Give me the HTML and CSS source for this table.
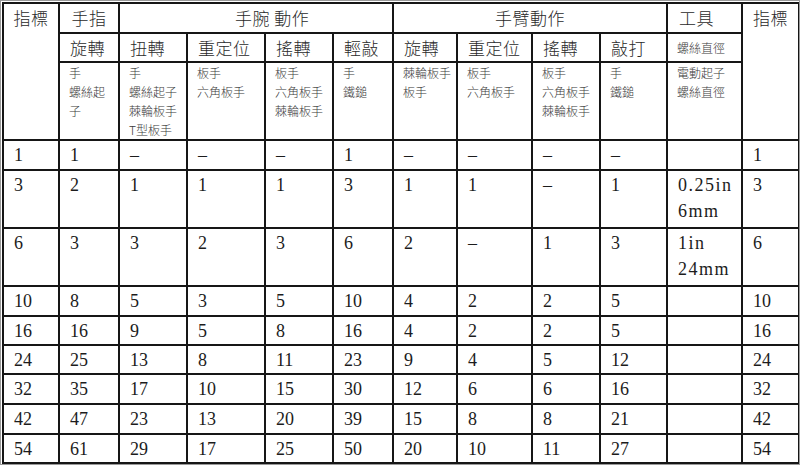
FILE: index.html
```html
<!DOCTYPE html>
<html lang="zh-Hant">
<head>
<meta charset="utf-8">
<title>指標</title>
<link rel="stylesheet" href="styles.css">
</head>
<body>
<div class="frame">
<table class="grid">
  <colgroup>
    <col class="c1"><col class="c2"><col class="c3"><col class="c4"><col class="c5"><col class="c6">
    <col class="c7"><col class="c8"><col class="c9"><col class="c10"><col class="c11"><col class="c12">
  </colgroup>
  <thead>
    <tr class="h1">
      <th rowspan="3" class="center">指標</th>
      <th class="center">手指</th>
      <th colspan="4" class="wrist">手腕 動作</th>
      <th colspan="4" class="center">手臂動作</th>
      <th class="tool">工具</th>
      <th rowspan="3" class="center">指標</th>
    </tr>
    <tr class="h2">
      <th>旋轉</th>
      <th>扭轉</th>
      <th>重定位</th>
      <th>搖轉</th>
      <th>輕敲</th>
      <th>旋轉</th>
      <th>重定位</th>
      <th>搖轉</th>
      <th>敲打</th>
      <th class="small mid">螺絲直徑</th>
    </tr>
    <tr class="h3">
      <th class="small">手<br>螺絲起<br>子</th>
      <th class="small">手<br>螺絲起子<br>棘輪板手<br>T型板手</th>
      <th class="small">板手<br>六角板手</th>
      <th class="small">板手<br>六角板手<br>棘輪板手</th>
      <th class="small">手<br>鐵鎚</th>
      <th class="small">棘輪板手<br>板手</th>
      <th class="small">板手<br>六角板手</th>
      <th class="small">板手<br>六角板手<br>棘輪板手</th>
      <th class="small">手<br>鐵鎚</th>
      <th class="small">電動起子<br>螺絲直徑</th>
    </tr>
  </thead>
  <tbody>
    <tr class="r30"><td>1</td><td>1</td><td>–</td><td>–</td><td>–</td><td>1</td><td>–</td><td>–</td><td>–</td><td>–</td><td></td><td>1</td></tr>
    <tr class="r58"><td>3</td><td>2</td><td>1</td><td>1</td><td>1</td><td>3</td><td>1</td><td>1</td><td>–</td><td>1</td><td class="size">0.25in<br>6mm</td><td>3</td></tr>
    <tr class="r58"><td>6</td><td>3</td><td>3</td><td>2</td><td>3</td><td>6</td><td>2</td><td>–</td><td>1</td><td>3</td><td class="size">1in<br>24mm</td><td>6</td></tr>
    <tr class="r30"><td>10</td><td>8</td><td>5</td><td>3</td><td>5</td><td>10</td><td>4</td><td>2</td><td>2</td><td>5</td><td></td><td>10</td></tr>
    <tr class="r29"><td>16</td><td>16</td><td>9</td><td>5</td><td>8</td><td>16</td><td>4</td><td>2</td><td>2</td><td>5</td><td></td><td>16</td></tr>
    <tr class="r29"><td>24</td><td>25</td><td>13</td><td>8</td><td>11</td><td>23</td><td>9</td><td>4</td><td>5</td><td>12</td><td></td><td>24</td></tr>
    <tr class="r30"><td>32</td><td>35</td><td>17</td><td>10</td><td>15</td><td>30</td><td>12</td><td>6</td><td>6</td><td>16</td><td></td><td>32</td></tr>
    <tr class="r30"><td>42</td><td>47</td><td>23</td><td>13</td><td>20</td><td>39</td><td>15</td><td>8</td><td>8</td><td>21</td><td></td><td>42</td></tr>
    <tr class="r29"><td>54</td><td>61</td><td>29</td><td>17</td><td>25</td><td>50</td><td>20</td><td>10</td><td>11</td><td>27</td><td></td><td>54</td></tr>
  </tbody>
</table>
</div>
</body>
</html>
```

FILE: styles.css
```css
html, body {
  margin: 0;
  padding: 0;
  background: #ffffff;
}

.frame {
  width: 798px;
  height: 463px;
  border: 1px solid #9a9a9a;
  padding: 0;
  overflow: hidden;
}

.grid {
  border-collapse: collapse;
  table-layout: fixed;
  width: 796px;
  margin: 1px 0 0 1px;
  font-family: "Liberation Serif", "Noto Sans CJK TC", serif;
  font-size: 18px;
  color: #1c1c1c;
}

.c1 { width: 56px; }
.c2 { width: 60px; }
.c3 { width: 68px; }
.c4 { width: 78px; }
.c5 { width: 68px; }
.c6 { width: 60px; }
.c7 { width: 64px; }
.c8 { width: 75px; }
.c9 { width: 68px; }
.c10 { width: 67px; }
.c11 { width: 75px; }
.c12 { width: 57px; }

.grid th,
.grid td {
  border: 2px solid #161616;
  padding: 1px 2px 0 10px;
  vertical-align: top;
  text-align: left;
  font-weight: normal;
  line-height: 26px;
  overflow: hidden;
  white-space: nowrap;
}

.grid th {
  font-family: "Noto Sans CJK TC", "Liberation Serif", sans-serif;
  font-size: 17px;
  font-weight: 300;
  letter-spacing: 0.5px;
  color: #2a2a2a;
}

.h1 { height: 30px; }
.h2 { height: 29px; }
.h3 { height: 77px; }

.h1 th { padding-top: 1px; }
.h2 th { padding-top: 1px; }

.grid th.center {
  text-align: center;
  padding-left: 2px;
}

.grid th.wrist {
  padding-left: 115px;
}

.grid th.tool {
  padding-left: 11px;
}

.grid th.small {
  font-size: 12px;
  line-height: 19px;
  color: #3a3a3a;
  padding: 0 2px 0 9px;
  letter-spacing: 0;
}

.grid th.small.mid {
  vertical-align: middle;
}

.r29 { height: 29px; }
.r30 { height: 30px; }
.r58 { height: 58px; }

.grid td.size {
  letter-spacing: 1.5px;
}
```
